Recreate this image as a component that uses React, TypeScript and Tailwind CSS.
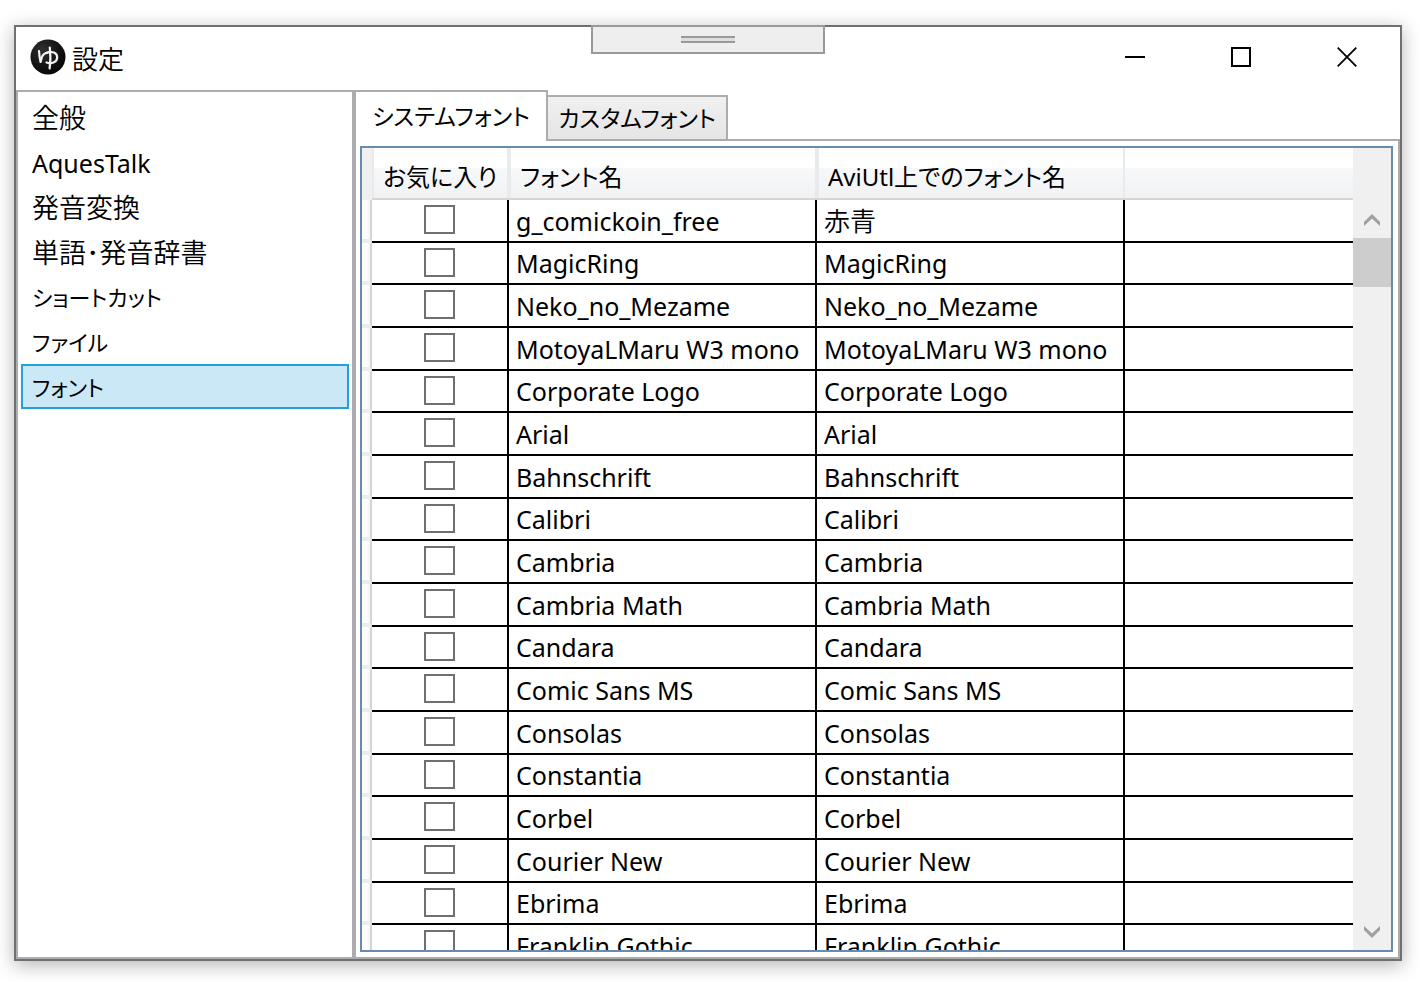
import React, { useState } from "react";

const kanji = "pt-1 text-[27px] font-[350]";
const latin = "pt-1 text-[25px]";
const kana = "pt-0.5 text-[22px]";

const sections: { label: string; text: string }[] = [
  { label: "全般", text: kanji },
  { label: "AquesTalk", text: latin },
  { label: "発音変換", text: kanji },
  { label: "単語･発音辞書", text: kanji },
  { label: "ショートカット", text: kana },
  { label: "ファイル", text: kana },
  { label: "フォント", text: kana },
];

const fonts: { name: string; alias?: string }[] = [
  { name: "g_comickoin_free", alias: "赤青" },
  { name: "MagicRing" },
  { name: "Neko_no_Mezame" },
  { name: "MotoyaLMaru W3 mono" },
  { name: "Corporate Logo" },
  { name: "Arial" },
  { name: "Bahnschrift" },
  { name: "Calibri" },
  { name: "Cambria" },
  { name: "Cambria Math" },
  { name: "Candara" },
  { name: "Comic Sans MS" },
  { name: "Consolas" },
  { name: "Constantia" },
  { name: "Corbel" },
  { name: "Courier New" },
  { name: "Ebrima" },
  { name: "Franklin Gothic" },
];

function AppLogo() {
  return (
    <svg viewBox="0 0 36 36" className="size-9 shrink-0" aria-hidden="true">
      <defs>
        <radialGradient id="logo" cx="0.35" cy="0.3" r="0.8">
          <stop offset="0" stopColor="#303030" />
          <stop offset="0.6" stopColor="#121212" />
          <stop offset="1" stopColor="#050505" />
        </radialGradient>
      </defs>
      <circle cx="18" cy="18" r="17.5" fill="url(#logo)" />
      <g fill="none" stroke="#f4f4f4" strokeWidth="2.2" strokeLinecap="round" strokeLinejoin="round">
        <path d="M9 12C9.200 15 9.600 18.500 10.600 23L11.800 18.500C12.500 15.500 14.500 14 18 13.200" />
        <path d="M16.500 14C22 11.800 27.300 13.500 27.200 18.500C27 23.500 21 25.200 16.500 23.500" />
        <path d="M19.800 8.500C20.400 14 20.600 23 19.600 29.500" />
      </g>
    </svg>
  );
}

function TitleBar() {
  return (
    <header className="flex h-[63px] shrink-0 items-start">
      <div className="flex h-[60px] flex-1 items-center gap-1.5 pl-3.5">
        <AppLogo />
        <h1 className="pt-1 text-[26px] font-[350]">設定</h1>
      </div>
      <button aria-label="最小化" className="flex h-[60px] w-[106px] items-center justify-center">
        <svg width="20" height="20" viewBox="0 0 20 20">
          <path d="M0 10H20" stroke="#000" strokeWidth="2" />
        </svg>
      </button>
      <button aria-label="最大化" className="flex h-[60px] w-[106px] items-center justify-center">
        <svg width="20" height="20" viewBox="0 0 20 20">
          <path d="M1 1H19V19H1Z" fill="none" stroke="#000" strokeWidth="2" />
        </svg>
      </button>
      <button aria-label="閉じる" className="flex h-[60px] w-[106px] items-center justify-center">
        <svg width="20" height="20" viewBox="0 0 20 20">
          <path d="M0.700 0.700L19.300 19.300M19.300 0.700L0.700 19.300" stroke="#000" strokeWidth="1.800" />
        </svg>
      </button>
    </header>
  );
}

function Chevron({ down = false }: { down?: boolean }) {
  return (
    <svg width="16" height="12" viewBox="0 0 16 12" className={down ? "rotate-180" : ""}>
      <path d="M0 8L8 0L16 8V12L8 4.500L0 12Z" fill="#a0a0a0" />
    </svg>
  );
}

function ScrollBar() {
  return (
    <div className="flex w-[38px] shrink-0 flex-col bg-[#f0f0f0] pt-[52px]">
      <button aria-label="上へ" className="flex h-[38px] items-center justify-center pt-0.5">
        <Chevron />
      </button>
      <div className="flex-1">
        <div className="h-[49px] bg-[#cdcdcd]" />
      </div>
      <button aria-label="下へ" className="flex h-[38px] items-center justify-center pt-0.5">
        <Chevron down />
      </button>
    </div>
  );
}

function HeaderCell({ children }: { children?: React.ReactNode }) {
  return (
    <th
      scope="col"
      className="border-b-2 border-[#d5d5d5] bg-[linear-gradient(#fff_40%,#f7f8fa_40%,#f1f2f4)] p-0 text-left font-normal"
    >
      <div className="flex h-[50px] items-center border-x-2 border-[#e9eaeb] pt-2 pl-[9px] text-[24px]">
        {children}
      </div>
    </th>
  );
}

function FontTable() {
  const [checked, setChecked] = useState<Record<string, boolean>>({});
  return (
    <table className="w-full table-fixed border-separate border-spacing-0 leading-8 whitespace-nowrap">
      <colgroup>
        <col className="w-[10px]" />
        <col className="w-[137px]" />
        <col className="w-[308px]" />
        <col className="w-[308px]" />
        <col />
      </colgroup>
      <thead>
        <tr className="h-[52px]">
          <td className="bg-[#f0f0f0] p-0" />
          <HeaderCell>お気に入り</HeaderCell>
          <HeaderCell>フォント名</HeaderCell>
          <HeaderCell>AviUtl上でのフォント名</HeaderCell>
          <td className="border-b-2 border-[#d5d5d5] bg-[linear-gradient(#fff_40%,#f7f8fa_40%,#f1f2f4)] p-0" />
        </tr>
      </thead>
      <tbody>
        {fonts.map(({ name, alias }) => (
          <tr key={name} className="h-[43px] nth-[3n+2]:h-[42px]">
            <td className="border-r-2 border-b-4 border-r-[#d5d5d5] border-b-[#ececec] bg-linear-to-r from-white from-60% to-[#f3f3f3] p-0" />
            <td className="border-r-2 border-b-2 border-black p-0">
              <input
                type="checkbox"
                aria-label={name}
                checked={!!checked[name]}
                onChange={(e) => setChecked({ ...checked, [name]: e.target.checked })}
                className="mx-auto mb-0.5 block h-[29px] w-[31px] appearance-none border-2 border-[#707070] bg-white checked:bg-[#707070]"
              />
            </td>
            <td className="border-r-2 border-b-2 border-black p-0 pl-[7px]">
              <div className="h-8">{name}</div>
            </td>
            <td className="border-r-2 border-b-2 border-black p-0 pl-[7px]">
              <div className={alias ? "h-8 text-[26px] font-[350]" : "h-8"}>{alias ?? name}</div>
            </td>
            <td className="border-b-2 border-black p-0" />
          </tr>
        ))}
      </tbody>
    </table>
  );
}

export default function App() {
  const [section, setSection] = useState("フォント");
  return (
    <div className="h-screen bg-white pt-[25px] pr-[18px] pb-[21px] pl-[14px] font-['Noto_Sans','Noto_Sans_CJK_JP',sans-serif] text-[25px] text-black [font-feature-settings:'palt']">
      <div className="relative flex h-full flex-col border-2 border-[#6f706f] bg-white shadow-[0_4px_18px_rgba(0,0,0,0.3)]">
        <div className="absolute -top-0.5 left-1/2 flex h-[29px] w-[234px] -translate-x-1/2 justify-center border-2 border-[#999] bg-[#eee] pt-[9px]">
          <div className="h-[7px] w-[54px] border-y-2 border-[#999] bg-[#dedede]" />
        </div>
        <TitleBar />
        <div className="flex min-h-0 flex-1">
          <nav className="w-[338px] shrink-0 border-2 border-[#abadb3] px-[3px] pt-0.5">
            {sections.map(({ label, text }) => (
              <button
                key={label}
                onClick={() => setSection(label)}
                className={`flex h-[45px] w-full items-center border-2 pl-[9px] ${text} ${
                  section === label ? "border-[#26a0da] bg-[#cbe8f6]" : "border-transparent"
                }`}
              >
                {label}
              </button>
            ))}
          </nav>
          <main className="flex min-w-0 flex-1 flex-col">
            <div role="tablist" className="flex h-[49px] shrink-0 items-end text-[23px]">
              <button
                role="tab"
                aria-selected="true"
                className="z-10 -mb-0.5 flex h-[51px] w-[194px] items-center justify-center border-2 border-b-0 border-[#acacac] bg-white"
              >
                システムフォント
              </button>
              <button
                role="tab"
                aria-selected="false"
                className="flex h-[44px] w-[180px] items-center justify-center border-2 border-b-0 border-l-0 border-[#acacac] bg-linear-to-b from-[#f0f0f0] to-[#e5e5e5]"
              >
                カスタムフォント
              </button>
            </div>
            <div className="flex min-h-0 flex-1 border-2 border-[#acacac] p-[5px] pl-1">
              <div className="flex min-w-0 flex-1 border-2 border-[#688caf]">
                <div className="min-w-0 flex-1 overflow-hidden">
                  <FontTable />
                </div>
                <ScrollBar />
              </div>
            </div>
          </main>
        </div>
      </div>
    </div>
  );
}
